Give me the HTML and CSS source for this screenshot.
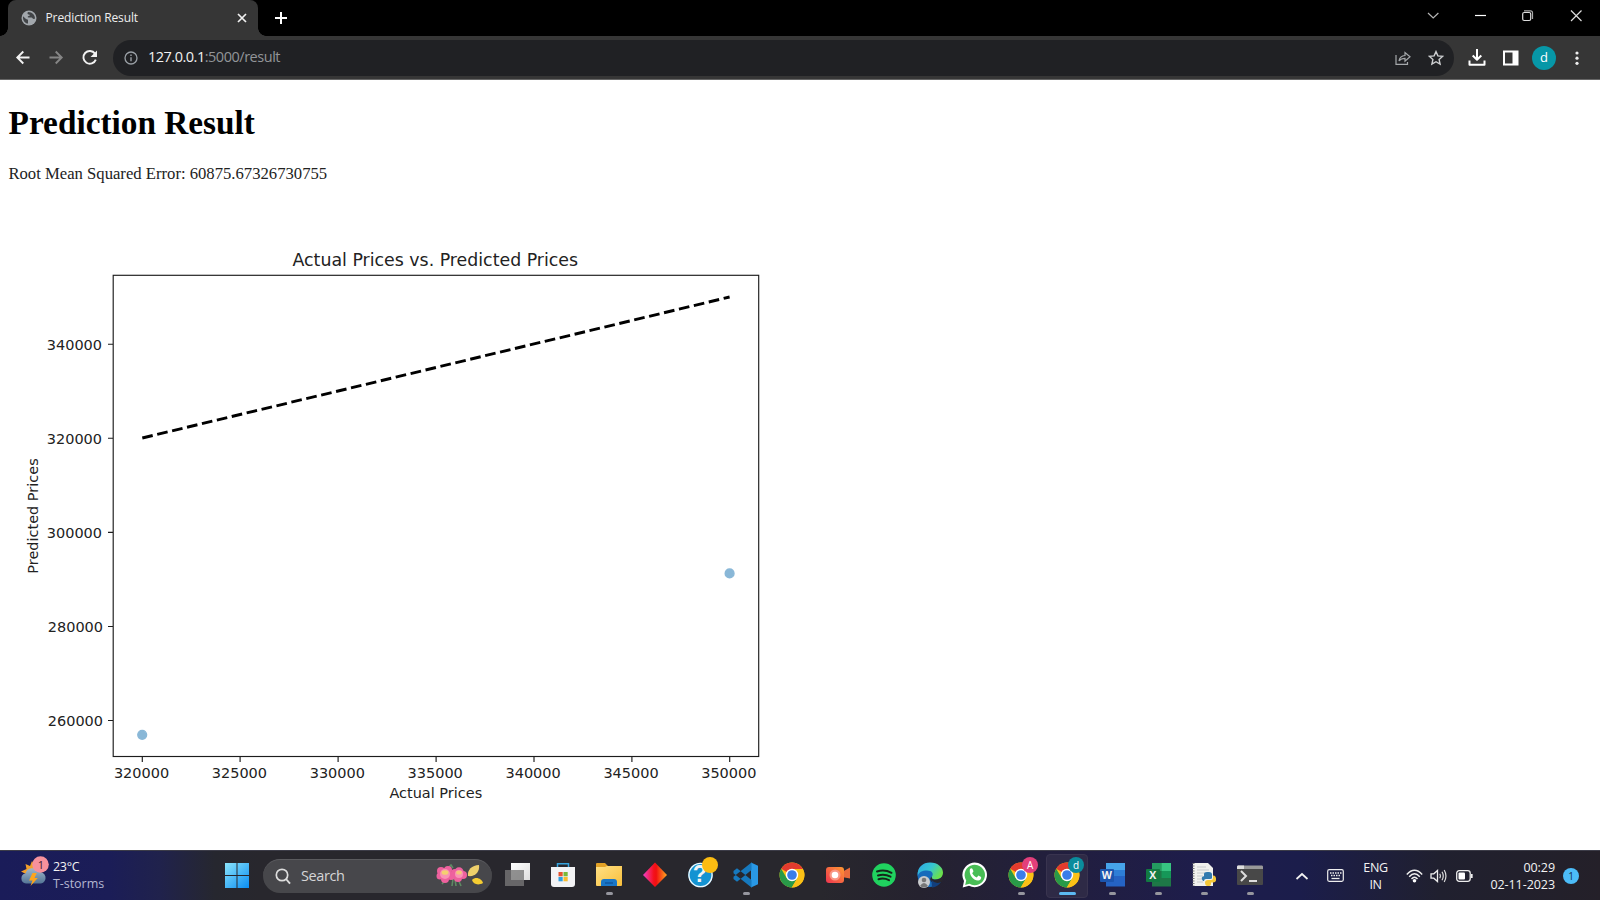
FILE: index.html
```html
<!DOCTYPE html>
<html lang="en">
<head>
<meta charset="utf-8">
<title>Prediction Result</title>
<link rel="stylesheet" href="styles.css">
</head>
<body>
<svg width="0" height="0" class="defs">
  <defs>
    <linearGradient id="win" gradientUnits="userSpaceOnUse" x1="0" y1="0" x2="24" y2="25"><stop offset="0" stop-color="#8be4fb"/><stop offset="1" stop-color="#0a8df2"/></linearGradient>
    <linearGradient id="fold" x1="0" y1="0" x2="1" y2="1"><stop offset="0" stop-color="#ffe084"/><stop offset="1" stop-color="#f8bf3c"/></linearGradient>
    <linearGradient id="dia"><stop offset="0" stop-color="#f040c8"/><stop offset=".45" stop-color="#f4101c"/><stop offset=".55" stop-color="#f01010"/><stop offset="1" stop-color="#ffa820"/></linearGradient>
    <linearGradient id="cam" x1="0" y1="1" x2="1" y2="0"><stop offset="0" stop-color="#ee3450"/><stop offset="1" stop-color="#ff9a32"/></linearGradient>
    <linearGradient id="edge" x1="0" y1="0" x2="1" y2=".5"><stop offset="0" stop-color="#2ea7e6"/><stop offset=".55" stop-color="#36c6d0"/><stop offset="1" stop-color="#6be04c"/></linearGradient>
    <linearGradient id="cloud" x1="0" y1="0" x2="0" y2="1"><stop offset="0" stop-color="#a0b7cc"/><stop offset="1" stop-color="#547596"/></linearGradient>
    <linearGradient id="tv" x1="0" y1="0" x2="1" y2="1"><stop offset="0" stop-color="#fff"/><stop offset="1" stop-color="#ddd"/></linearGradient>
    <symbol id="chrome" viewBox="0 0 26 26">
      <circle cx="13" cy="13" r="12.5" fill="#fbc116"/>
      <path d="M13 13 2.200 6.700A12.500 12.500 0 0 1 23.900 7H13z" fill="#e33b2e"/>
      <path d="M2.200 6.700A12.500 12.500 0 0 0 12.800 25.500L18.400 16 13 13 7.600 16z" fill="#299a48"/>
      <path d="M18.400 16 12.800 25.500A12.500 12.500 0 0 0 23.900 7H13z" fill="#fbc116"/>
      <circle cx="13" cy="13" r="6.200" fill="#fff"/><circle cx="13" cy="13" r="4.800" fill="#3a7de9"/>
    </symbol>
  </defs>
</svg>

<header class="titlebar">
  <div class="tab">
    <svg class="globe" width="16" height="16" viewBox="0 0 16 16"><circle cx="8" cy="8" r="7.500" fill="#a2a7ac"/><path d="M2 6.200 5 9l2 .8v3.800C4 13.400 1.600 10.500 2 6.200zM7 2c-1 1.800-.5 2.300.8 2.400 1.500 0 1.200 1.300 0 1.600-1.300.3-1.500 1.200-.3 1.500h3c1 .2 1 1.500 2.500 1.400l1-.4C14 5 11.500 2 7 2z" fill="#414447"/></svg>
    <span class="tab-title">Prediction Result</span>
    <svg class="tab-close" width="10" height="10" viewBox="0 0 10 10"><path d="M1 1l8 8M9 1 1 9" stroke="#f1f1f1" stroke-width="1.700"/></svg>
  </div>
  <svg class="newtab" width="14" height="14" viewBox="0 0 14 14"><path d="M7 1v12M1 7h12" stroke="#fff" stroke-width="2"/></svg>
  <div class="winctl">
    <svg width="48" height="32" viewBox="0 0 48 32"><path d="m19 13 5.200 5 5.200-5" fill="none" stroke="#b5b5b5" stroke-width="1.200"/></svg>
    <svg width="47" height="32" viewBox="0 0 47 32"><path d="M18 15.500h11" stroke="#fff" stroke-width="1.200"/></svg>
    <svg width="48" height="32" viewBox="0 0 48 32"><rect x="18.700" y="12.500" width="8" height="8" rx="1.500" fill="none" stroke="#ddd" stroke-width="1.200"/><path d="M20 10.800h6.500q2 0 2 2V19" fill="none" stroke="#aaa" stroke-width="1.200"/></svg>
    <svg width="48" height="32" viewBox="0 0 48 32"><path d="m19 10.500 10.500 10.500m0-10.500L19 21" stroke="#ddd" stroke-width="1.200"/></svg>
  </div>
</header>

<nav class="toolbar">
  <svg class="nav" width="113" height="43" viewBox="0 0 113 43">
    <g fill="none" stroke="#f2f2f2" stroke-width="1.900"><path d="M29.500 21.500H17.300m6-6-6 6 6 6"/><path d="M49.500 21.500h12.200m-6-6 6 6-6 6" stroke="#858585"/><path d="M95 17.600a6.400 6.400 0 1 0 .8 6"/></g>
    <path d="M97 14.500v6.500h-6.500z" fill="#f2f2f2"/>
  </svg>
  <div class="omnibox">
    <svg width="14" height="14" viewBox="0 0 14 14"><circle cx="7" cy="7" r="6" fill="none" stroke="#9aa0a6" stroke-width="1.300"/><path d="M7 6.200v4M7 3.600v1.500" stroke="#9aa0a6" stroke-width="1.400"/></svg>
    <span class="url">127.0.0.1<span class="path">:5000/result</span></span>
    <svg class="share" width="16" height="16" viewBox="0 0 16 16"><path d="M1 5v9.400h11.500V12M4 11c.5-3.500 2.500-5.300 6-5.500V2.500l5 4.300-5 4.300V8.300C7.300 8.300 5.500 9 4 11z" fill="none" stroke="#a5a8ab" stroke-width="1.200"/></svg>
    <svg class="star" width="16" height="16" viewBox="0 0 16 16"><path d="m8 1.600 1.900 4.300 4.700.5-3.500 3.100 1 4.600L8 11.700l-4.100 2.400 1-4.600L1.400 6.400l4.700-.5z" fill="none" stroke="#cdcfd1" stroke-width="1.400"/></svg>
  </div>
  <svg class="download" width="18" height="18" viewBox="0 0 18 18"><path d="M9 0v10M4.700 6.500 9 10.800l4.300-4.300M1.500 11.500v4.300h15v-4.300" fill="none" stroke="#fff" stroke-width="2" stroke-linejoin="round"/></svg>
  <svg class="panel" width="16" height="16" viewBox="0 0 16 16"><path d="M0 .5h15.500v15H0zM2 2.500v11h7.500v-11z" fill="#fff" fill-rule="evenodd"/></svg>
  <span class="avatar">d</span>
  <svg class="more" width="4" height="14" viewBox="0 0 4 14"><g fill="#eee"><circle cx="2" cy="2" r="1.600"/><circle cx="2" cy="7.200" r="1.600"/><circle cx="2" cy="12.300" r="1.600"/></g></svg>
</nav>

<main class="page">
  <h1>Prediction Result</h1>
  <p>Root Mean Squared Error: 60875.67326730755</p>
  <svg class="plot" width="833" height="625" viewBox="8 200 833 625">
    <rect x="113.200" y="275.300" width="645.500" height="481.200" fill="none" stroke="#1c1c1c" stroke-width="1.150"/>
    <path d="M108 344.200h5m-5 94h5m-5 94.200h5m-5 94.100h5m-5 94h5M142.300 757v5m97.800-5v5m98-5v5m98-5v5m97.900-5v5m97.900-5v5m97.800-5v5" stroke="#1c1c1c" stroke-width="1.150"/>
    <path d="M142.300 438 729.600 297" stroke="#000" stroke-width="2.900" stroke-dasharray="10.700 4.630"/>
    <g fill="#1f77b4" stroke="#1f77b4" stroke-width="1.400" opacity=".52"><circle cx="142.200" cy="734.800" r="4.400"/><circle cx="729.600" cy="573.400" r="4.400"/></g>
    <g class="ylab"><text x="102" y="349.700">340000</text><text x="102" y="443.700">320000</text><text x="102" y="537.700">300000</text><text x="103" y="632">280000</text><text x="103" y="726">260000</text></g>
    <g class="xlab"><text x="141.500" y="777.600">320000</text><text x="239.400" y="777.600">325000</text><text x="337.300" y="777.600">330000</text><text x="435.200" y="777.600">335000</text><text x="533.100" y="777.600">340000</text><text x="631" y="777.600">345000</text><text x="728.800" y="777.600">350000</text>
    <text x="435.800" y="797.600">Actual Prices</text><text transform="translate(37.800 516) rotate(-90)">Predicted Prices</text><text class="ptitle" x="435.300" y="266">Actual Prices vs. Predicted Prices</text></g>
  </svg>
</main>

<footer class="taskbar">
  <div class="weather">
    <svg width="32" height="36" viewBox="0 0 32 36"><path d="m12 5 2.500 4 4-1-1 5 3 4-5 5H5l1-4-5-2.500 5.500-2.500-1-5L10 10z" fill="#f3a02a"/><path d="M6 27.500a5 5 0 0 1-.5-9.900 7 7 0 0 1 13-1.500 5.700 5.700 0 0 1 2.500 11.400z" fill="url(#cloud)"/><path d="m12.500 17-3.500 7.500h3.500L10.500 30l7.300-8h-3.300l2.300-5z" fill="#fda51e"/><circle cx="20.500" cy="8.500" r="8.300" fill="#f7919c"/></svg>
    <span class="wbadge">1</span>
    <div class="wtext"><div>23°C</div><div class="dim">T-storms</div></div>
  </div>
  <svg class="start" width="24" height="25" viewBox="0 0 24 25"><path d="M0 0h11.500v12H0zM12.500 0H24v12H12.500zM0 13h11.500v12H0zM12.500 13H24v12H12.500z" fill="url(#win)"/></svg>
  <div class="search">
    <svg width="16" height="17" viewBox="0 0 16 17"><circle cx="7" cy="7" r="5.700" fill="none" stroke="#ddd" stroke-width="1.700"/><path d="m11 11 4 4.700" stroke="#ddd" stroke-width="1.900"/></svg>
    <span>Search</span>
    <svg class="flowers" width="48" height="24" viewBox="0 0 48 24"><path d="m13 3 2-2 2 3M17 15l-1 7m3-7 1 7m2-7 3 7M10 15l-4 5" stroke="#5e8b63" stroke-width="1.600" fill="none"/><g fill="#ee619e"><circle cx="5" cy="7" r="4"/><circle cx="12" cy="6" r="4"/><circle cx="15" cy="12" r="4"/><circle cx="9" cy="15" r="4"/><circle cx="4" cy="12" r="3.500"/><circle cx="9" cy="10" r="6"/><circle cx="23" cy="8" r="4.700"/><circle cx="27" cy="11" r="4"/><circle cx="22" cy="14" r="4"/><circle cx="19" cy="9" r="4"/></g><g fill="#f993b4"><circle cx="9" cy="10" r="5"/><circle cx="23" cy="10" r="4"/></g><ellipse cx="9" cy="8.500" rx="3.400" ry="2.300" fill="#f4d070"/><ellipse cx="23" cy="8.500" rx="2.800" ry="2" fill="#f4c479"/><path d="M32 12c-1-6 4-11 11-11 1 7-4 12-11 11z" fill="#edcf6b"/><path d="M36 16c4-4 10-1 11 3-5 3-10 1-11-3z" fill="#f5cd32"/></svg>
  </div>
  <div class="apps">
    <span class="app"><svg viewBox="0 0 26 26"><path d="M7 1h19v17H7z" fill="url(#tv)"/><path d="M1 8h19v16H1z" fill="#777" opacity=".8"/></svg></span>
    <span class="app"><svg viewBox="0 0 26 26"><path d="M7.500 6V1.700h11V6" fill="none" stroke="#37a4de" stroke-width="1.500"/><path d="M1 5h24v17q0 3-3 3H4q-3 0-3-3z" fill="#f3f3f5"/><path d="M8.500 10h4.200v4.300H8.500z" fill="#e5512e"/><path d="M13.500 10h4.200v4.300h-4.200z" fill="#79b83a"/><path d="M8.500 15h4.200v4.300H8.500z" fill="#2f9fe0"/><path d="M13.500 15h4.200v4.300h-4.200z" fill="#f8bc2f"/></svg></span>
    <span class="app open"><svg viewBox="0 0 26 26"><path d="M0 2q0-1 1-1h8l3 3h11v8H0z" fill="#e2a126"/><path d="M0 5h9l2-1h15v19q0 1-1 1H1q-1 0-1-1z" fill="url(#fold)"/><path d="M5 24v-4q0-3 3-3h10q3 0 3 3v4z" fill="#1976c7"/><path d="M9 21h8" stroke="#11569e" stroke-width="1.500"/></svg></span>
    <span class="app"><svg viewBox="0 0 26 26"><path d="m13 .5 12 12.500-12 12L1 13z" fill="url(#dia)"/></svg></span>
    <span class="app"><svg viewBox="0 0 26 26"><circle cx="12.500" cy="13" r="12.200" fill="#1493d2"/><circle cx="12.500" cy="13" r="11.600" fill="none" stroke="#f1f8fc" stroke-width="1.400"/></svg><b class="q">?</b><i class="yellow"></i></span>
    <span class="app open"><svg viewBox="0 0 26 26"><path d="m18 .5 7 3.200v18.600l-7 3.200z" fill="#2998e5"/><path d="M18.500 .5v7.500L4 19.800 .5 17v-2.300zM18.500 25.500V18L4 6.200.5 9v2.300z" fill="#1679be"/></svg></span>
    <span class="app"><svg><use href="#chrome"/></svg></span>
    <span class="app"><svg viewBox="0 0 26 26"><path d="m17 10 8-4.500v11L17 15z" fill="#e96a3c"/><rect x="1" y="5" width="18" height="16" rx="3" fill="url(#cam)"/><circle cx="10" cy="13" r="5.500" fill="#f99685"/><circle cx="10" cy="13" r="3.300" fill="#fff"/></svg></span>
    <span class="app"><svg viewBox="0 0 26 26"><circle cx="13" cy="13" r="11.800" fill="#20d25f"/><path d="M6 9.500q7.500-2.500 14.500 1.300M7 13.500q6.500-2 12.500 1.200M7.500 17.200q5.500-1.600 10.500 1" fill="none" stroke="#15251a" stroke-width="2" stroke-linecap="round"/></svg></span>
    <span class="app"><svg viewBox="0 0 26 26"><circle cx="12.500" cy="13" r="12" fill="#176bbb"/><path d="M.7 14C0 5 6 .5 13 .5c8 0 13 5 13 10 0 5-4 7-8 7-2 0-4-1-3-3 2-3 0-6-5-6S2 10 .7 14z" fill="url(#edge)"/><path d="M15 14.500c-1 2 1 3 3 3 3 0 6-1 8-4v4l-2 3q-6 3-10-1-2-3 1-5z" fill="#28272d"/><path d="M14.500 18q4 4.500 9.500 2-3 5-9 5.400z" fill="#123f7d"/><circle cx="7" cy="20" r="6" fill="#c9cbcd"/><circle cx="7" cy="18" r="2.300" fill="#777"/><path d="M3 24q4-6 8 0-4 3-8 0z" fill="#777"/></svg></span>
    <span class="app"><svg viewBox="0 0 26 26"><path d="M.7 25.500 2 19a12.300 12.300 0 1 1 5 4.800z" fill="#fff"/><path d="m3.200 23 1-4.500a10.200 10.200 0 1 1 3.300 3.200z" fill="#48bd55"/><path d="M8 7c1-1 2-1 2.500 0l1 2.300-1.300 1.900c1 2 2.400 3.300 4.600 4.200l1.600-1.800 2.700 1.300c.5 1.600-1 3.600-3 3.700C11 18.300 6.500 12.500 8 7z" fill="#fff"/></svg></span>
    <span class="app open"><svg><use href="#chrome"/></svg><i class="badge pink">A</i></span>
    <span class="app open active"><svg><use href="#chrome"/></svg><i class="badge teal">d</i></span>
    <span class="app open"><svg viewBox="0 0 26 26"><path d="M6 1h19v23.500H6z" fill="#2563c4"/><path d="M6 1h19v7H6z" fill="#46a4ea"/><path d="M6 8h19v6H6z" fill="#2e7ed6"/><rect y="7" width="14" height="13" rx="1" fill="#1b55af"/></svg><b class="letter">W</b></span>
    <span class="app open"><svg viewBox="0 0 26 26"><path d="M6 1h19v23.500H6z" fill="#1e7747"/><path d="M6 1h9.500v8H6z" fill="#249b60"/><path d="M15.500 1H25v8h-9.500z" fill="#37c481"/><path d="M15.500 9H25v7h-9.500z" fill="#169758"/><rect y="7" width="14" height="13" rx="1" fill="#127a42"/></svg><b class="letter">X</b></span>
    <span class="app open"><svg viewBox="0 0 26 26"><path d="M2 1h15l5 5v18H2z" fill="#f1f1ed"/><path d="M2.500 1v23" stroke="#777" stroke-dasharray="1 1.500" stroke-width="2"/><path d="M6 5h9M6 8h12M6 11h8M6 14h6M6 17h6M6 20h6" stroke="#c7cbcd"/><path d="M13 15v-3q0-2 3-2h2q3 0 3 2.500V16q0 1-2 1h-4q-2 0-2 2h-1q-3-4 1-5h4" fill="#327aae"/><path d="M22 13.500q3.500 0 3 5-.3 2-3 2h-2v2q-1 2.500-5 1-1-1-1-3 0-2.500 3-2.500h3q2 0 2-2z" fill="#f5c736"/></svg></span>
    <span class="app open"><svg viewBox="0 0 26 26"><path d="M0 4h26v18q0 1-1 1H1q-1 0-1-1z" fill="#484848"/><path d="M0 7V5q0-1.500 1-1.500h24q1 0 1 1.500v2z" fill="#999"/><path d="M0 7V5q0-1.500 1-1.500h6V7z" fill="#ddd"/><path d="m4 9 5 5-5 5M12 19h8" fill="none" stroke="#ddd" stroke-width="2"/></svg></span>
  </div>
  <div class="tray">
    <svg class="chev" width="14" height="8" viewBox="0 0 14 8"><path d="m1.500 7 5.500-5 5.500 5" fill="none" stroke="#f2f2f2" stroke-width="1.700"/></svg>
    <svg class="kbd" width="17" height="13" viewBox="0 0 17 13"><rect x=".7" y=".7" width="15.600" height="11.600" rx="1.500" fill="none" stroke="#eee" stroke-width="1.200"/><path d="M3 4h11.500M4 6.500h9.500" stroke="#eee" stroke-width="1.500" stroke-dasharray="1.500 1"/><path d="M4.500 9.500h8" stroke="#eee" stroke-width="1.300"/></svg>
    <div class="lang"><div>ENG</div><div>IN</div></div>
    <svg class="wifi" width="17" height="14" viewBox="0 0 17 14"><path d="M.8 5.500q7.700-8.500 15.400 0M3.200 7.800q5.300-6 10.600 0M5.500 10q3-3.500 6 0" fill="none" stroke="#eee" stroke-width="1.400"/><circle cx="8.500" cy="11.700" r="1.800" fill="#fff"/></svg>
    <svg class="vol" width="17" height="14" viewBox="0 0 17 14"><path d="M1 4.800h2.800L7.500 1.500v11L3.800 9.200H1z" fill="none" stroke="#eee" stroke-width="1.300"/><path d="M9.700 4.700q1.400 2.300 0 4.600M12 2.800q2.500 4.200 0 8.400M14.200 1q3.500 6 0 12" fill="none" stroke="#ddd" stroke-width="1.200"/></svg>
    <svg class="bat" width="17" height="12" viewBox="0 0 17 12"><rect x=".7" y=".7" width="13.500" height="10.600" rx="2.500" fill="none" stroke="#eee" stroke-width="1.300"/><rect x="2.500" y="2.500" width="6.500" height="7" rx="1" fill="#fff"/><path d="M15.800 4v4" stroke="#eee" stroke-width="1.700"/></svg>
    <div class="clock"><div>00:29</div><div>02-11-2023</div></div>
    <span class="count">1</span>
  </div>
</footer>
</body>
</html>
```

FILE: styles.css
```css
* { box-sizing: border-box; }
body {
  margin: 0;
  width: 1600px;
  height: 900px;
  overflow: hidden;
  display: flex;
  flex-direction: column;
  background: #fff;
  font-family: "Open Sans", "Noto Sans", sans-serif;
}
svg { display: block; flex: none; }
.defs { position: absolute; }

/* Browser window */
.titlebar { height: 36px; flex: none; background: #000; display: flex; padding-left: 8px; }
.tab {
  position: relative;
  width: 250px;
  height: 36px;
  padding: 0 11px 1px 13px;
  display: flex;
  align-items: center;
  background: #363636;
  border-radius: 8px 8px 0 0;
}
.tab::before, .tab::after {
  content: "";
  position: absolute;
  bottom: 0;
  width: 8px;
  height: 8px;
}
.tab::before { left: -8px; background: radial-gradient(circle at 0 0, #000 7.5px, #363636 8px); }
.tab::after { right: -8px; background: radial-gradient(circle at 100% 0, #000 7.5px, #363636 8px); }
.tab-title { margin-left: 8.5px; flex: 1; color: #eee; font-size: 12px; letter-spacing: -0.12px; white-space: nowrap; }
.newtab { margin: 11px 0 0 16px; }
.winctl { margin-left: auto; display: flex; }
.toolbar {
  height: 44px;
  flex: none;
  display: flex;
  align-items: center;
  background: #363636;
  border-bottom: 1px solid #666;
}
.omnibox {
  width: 1341px;
  height: 36px;
  padding: 0 10px 0 11px;
  display: flex;
  align-items: center;
  border-radius: 18px;
  background: #202124;
}
.url { margin: -2px 0 0 10px; color: #f1f1f1; font-size: 14.5px; letter-spacing: -0.5px; }
.path { color: #929599; letter-spacing: -0.47px; }
.share { margin-left: auto; }
.star { margin-left: 17px; }
.download { margin-left: 14px; }
.panel { margin-left: 17px; }
.avatar {
  margin-left: 13px;
  width: 24px;
  height: 24px;
  border-radius: 50%;
  background: #0797a7;
  color: #fff;
  font-size: 13px;
  line-height: 23px;
  text-align: center;
}
.more { margin-left: 19px; }

/* Page content */
.page { height: 770px; flex: none; padding: 0 8px; background: #fff; font-family: "Liberation Serif", serif; color: #000; }
h1 { margin: 24px 0 0 0.6px; font-size: 33.3px; line-height: 38px; letter-spacing: 0; }
p { margin: 22px 0 0 0.4px; font-size: 16.67px; line-height: 20px; color: #222; }
.plot { margin-top: 16px; font-family: "DejaVu Sans", sans-serif; font-size: 14.47px; fill: #222; }
.ylab { text-anchor: end; }
.xlab { text-anchor: middle; }
.ptitle { font-size: 17.36px; }

/* Taskbar */
.taskbar {
  height: 50px;
  flex: none;
  display: flex;
  align-items: center;
  border-top: 1px solid #3c3c48;
  color: #f3f3f3;
  background: linear-gradient(90deg, #1a1c59 0, #1b1d57 110px, #20224c 160px, #26272f 215px, #28272d 260px, #28272d 820px, #25222f 920px, #211e40 1080px, #1e1d4b 1200px, #1b1d4b 1300px, #20202f 1440px, #242029 1600px);
}
.weather { width: 225px; height: 49px; padding: 5px 0 0 20px; position: relative; display: flex; }
.wbadge { position: absolute; left: 33px; top: 5px; width: 16px; text-align: center; font-size: 11px; line-height: 17px; color: #3b2030; }
.wtext { margin: 2px 0 0 1px; font-size: 12.5px; line-height: 17px; letter-spacing: -0.3px; }
.wtext .dim { color: #b4b7d2; letter-spacing: -0.05px; }
.search {
  margin-left: 14px;
  width: 229px;
  height: 34px;
  padding: 0 8px 0 12px;
  display: flex;
  align-items: center;
  border-radius: 17px;
  background: #47474b;
  border-top: 1px solid #5b5b5f;
  font-size: 14.5px;
  letter-spacing: -0.4px;
  color: #d5d5d7;
}
.search span { margin: -2px 0 0 10px; }
.flowers { margin-left: auto; }
.apps { margin-left: 2.5px; display: flex; height: 49px; }
.app { position: relative; width: 45.81px; display: flex; justify-content: center; padding-top: 11px; }
.app svg { width: 26px; height: 26px; }
.app.open::after {
  content: "";
  position: absolute;
  left: 19.5px;
  top: 41px;
  width: 7px;
  height: 3px;
  border-radius: 2px;
  background: #96969e;
}
.app.active::before {
  content: "";
  position: absolute;
  left: 2px;
  top: 3px;
  width: 40px;
  height: 42px;
  border-radius: 4px;
  background: #2e2a46;
  border: 1px solid #39344f;
}
.app.active svg { position: relative; }
.app.active::after { left: 14.5px; width: 17px; background: #5cb9f2; }
.badge, .yellow { position: absolute; left: 24px; top: 6px; width: 16px; height: 16px; border-radius: 50%; font-style: normal; font-size: 10px; line-height: 16px; text-align: center; color: #fff; }
.pink { background: #e23f7b; }
.teal { background: #0b8c9c; }
.yellow { background: #fbbc12; }
.q { position: absolute; left: 15px; top: 10px; width: 14px; font: bold 23px/27px "Liberation Sans", sans-serif; }
.letter { position: absolute; left: 10px; top: 18px; width: 14px; text-align: center; font-size: 10.5px; line-height: 13px; }
.tray { flex: 1; display: flex; align-items: center; font-size: 12.5px; line-height: 17px; letter-spacing: -0.3px; }
.chev { margin-left: 21.5px; }
.kbd { margin-left: 18.5px; }
.lang { width: 40px; margin-left: 11.5px; text-align: center; }
.wifi { margin-left: 10px; }
.vol { margin-left: 7.5px; }
.bat { margin-left: 8.5px; }
.clock { margin: 0 0 0 auto; text-align: right; letter-spacing: -0.06px; }
.count { margin: 0 21px 0 8px; width: 16px; height: 16px; border-radius: 50%; background: #4cbcf8; color: #16324c; font-size: 10px; line-height: 16px; text-align: center; }
```
